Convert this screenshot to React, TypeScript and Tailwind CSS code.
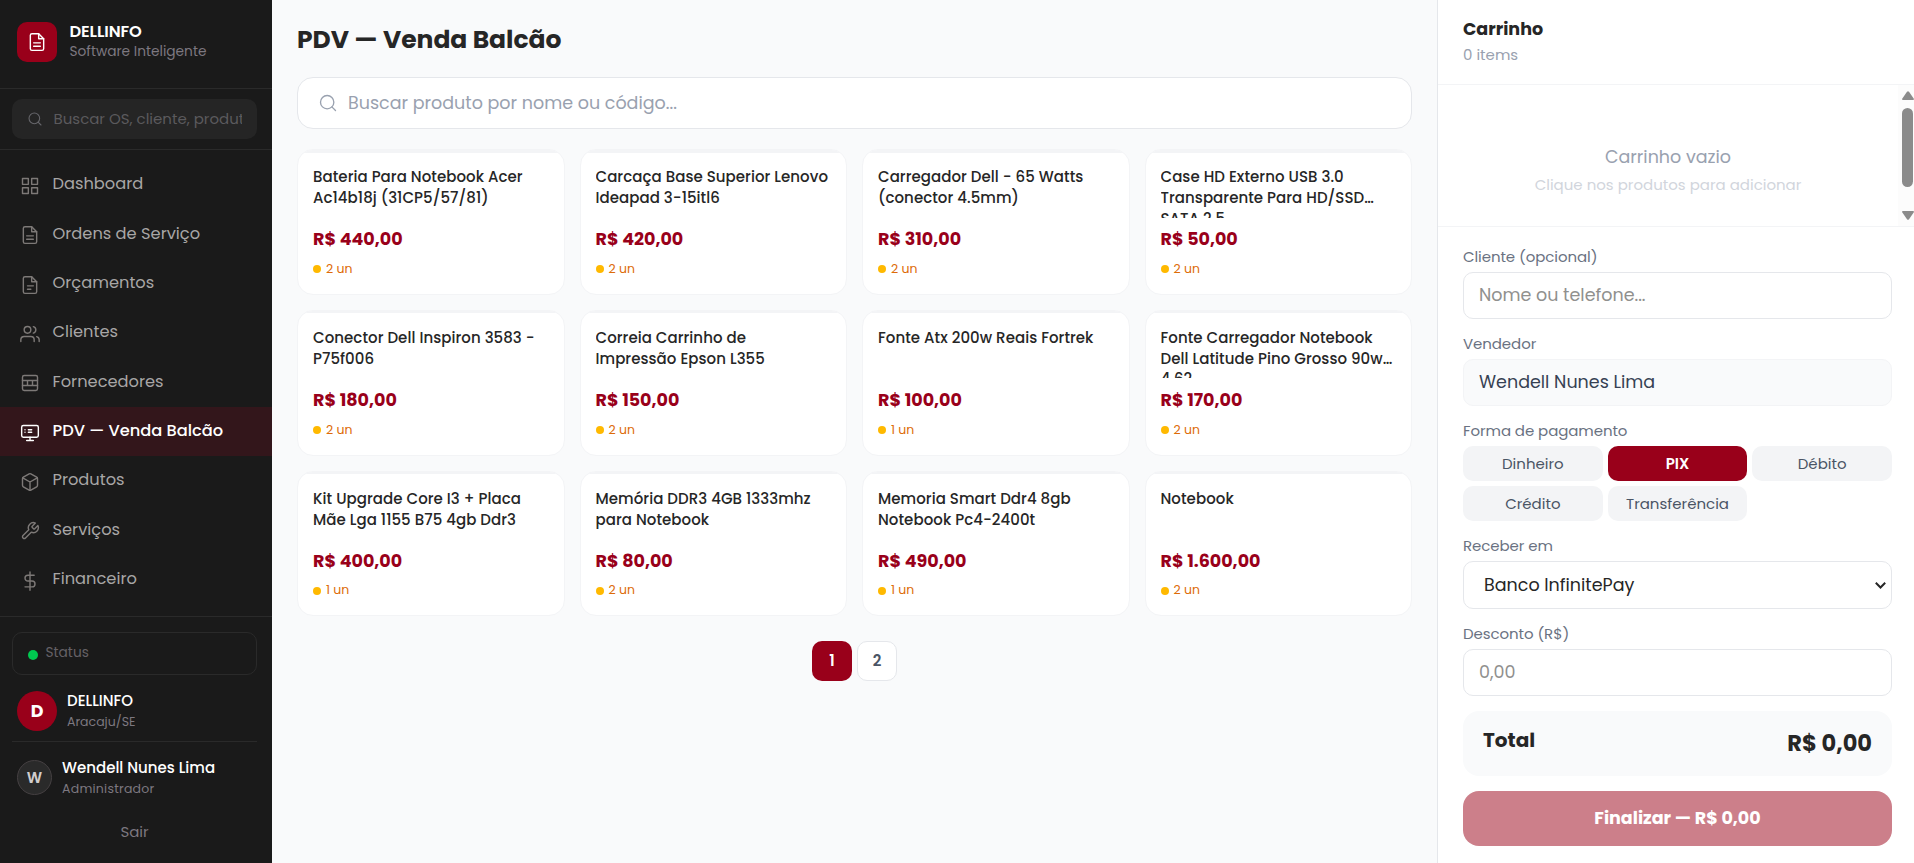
import type { ReactNode } from 'react'
import { Search } from 'lucide-react'

interface NavItem {
  label: string
  icon: ReactNode
  active?: boolean
}

const navItems: NavItem[] = [
  {
    label: 'Dashboard',
    icon: (
      <>
        <rect x="3" y="3" width="7" height="7" />
        <rect x="14" y="3" width="7" height="7" />
        <rect x="3" y="14" width="7" height="7" />
        <rect x="14" y="14" width="7" height="7" />
      </>
    ),
  },
  {
    label: 'Ordens de Serviço',
    icon: (
      <>
        <path d="M14 2H6a2 2 0 0 0-2 2v16a2 2 0 0 0 2 2h12a2 2 0 0 0 2-2V8z" />
        <path d="M14 2v6h6M8 13h8M8 17h8" />
      </>
    ),
  },
  {
    label: 'Orçamentos',
    icon: (
      <>
        <path d="M14 2H6a2 2 0 0 0-2 2v16a2 2 0 0 0 2 2h12a2 2 0 0 0 2-2V8z" />
        <path d="M14 2v6h6M9 13h7M9 17h4" />
      </>
    ),
  },
  {
    label: 'Clientes',
    icon: (
      <>
        <path d="M17 21v-2a4 4 0 0 0-4-4H5a4 4 0 0 0-4 4v2" />
        <circle cx="9" cy="7" r="4" />
        <path d="M23 21v-2a4 4 0 0 0-3-3.87M16 3.13a4 4 0 0 1 0 7.75" />
      </>
    ),
  },
  {
    label: 'Fornecedores',
    icon: (
      <>
        <rect x="3" y="3" width="18" height="18" rx="2" />
        <path d="M3 9h18M3 15h18M9 9v6M15 9v6" />
      </>
    ),
  },
  {
    label: 'PDV — Venda Balcão',
    active: true,
    icon: (
      <>
        <rect x="2" y="3" width="20" height="14" rx="2" />
        <path d="M8 21h8M12 17v4M6 8h.01M10 8h4M6 11h.01M10 11h4" />
      </>
    ),
  },
  {
    label: 'Produtos',
    icon: (
      <>
        <path d="M21 16V8a2 2 0 0 0-1-1.73l-7-4a2 2 0 0 0-2 0l-7 4A2 2 0 0 0 3 8v8a2 2 0 0 0 1 1.73l7 4a2 2 0 0 0 2 0l7-4A2 2 0 0 0 21 16z" />
        <path d="M3.27 6.96 12 12.01l8.73-5.05M12 22.08V12" />
      </>
    ),
  },
  {
    label: 'Serviços',
    icon: (
      <path d="M14.7 6.3a1 1 0 0 0 0 1.4l1.6 1.6a1 1 0 0 0 1.4 0l3.77-3.77a6 6 0 0 1-7.94 7.94l-6.91 6.91a2.12 2.12 0 0 1-3-3l6.91-6.91a6 6 0 0 1 7.94-7.94l-3.76 3.76z" />
    ),
  },
  {
    label: 'Financeiro',
    icon: <path d="M12 1v22M17 5H9.5a3.5 3.5 0 0 0 0 7h5a3.5 3.5 0 0 1 0 7H6" />,
  },
]

interface Product {
  name: string[]
  price: string
  stock: number
}

const products: Product[] = [
  { name: ['Bateria Para Notebook Acer', 'Ac14b18j (31CP5/57/81)'], price: '440,00', stock: 2 },
  { name: ['Carcaça Base Superior Lenovo', 'Ideapad 3-15itl6'], price: '420,00', stock: 2 },
  { name: ['Carregador Dell - 65 Watts', '(conector 4.5mm)'], price: '310,00', stock: 2 },
  { name: ['Case HD Externo USB 3.0', 'Transparente Para HD/SSD…', 'SATA 2.5'], price: '50,00', stock: 2 },
  { name: ['Conector Dell Inspiron 3583 -', 'P75f006'], price: '180,00', stock: 2 },
  { name: ['Correia Carrinho de', 'Impressão Epson L355'], price: '150,00', stock: 2 },
  { name: ['Fonte Atx 200w Reais Fortrek'], price: '100,00', stock: 1 },
  { name: ['Fonte Carregador Notebook', 'Dell Latitude Pino Grosso 90w…', '4.62'], price: '170,00', stock: 2 },
  { name: ['Kit Upgrade Core I3 + Placa', 'Mãe Lga 1155 B75 4gb Ddr3'], price: '400,00', stock: 1 },
  { name: ['Memória DDR3 4GB 1333mhz', 'para Notebook'], price: '80,00', stock: 2 },
  { name: ['Memoria Smart Ddr4 8gb', 'Notebook Pc4-2400t'], price: '490,00', stock: 1 },
  { name: ['Notebook'], price: '1.600,00', stock: 2 },
]

const payments = ['Dinheiro', 'PIX', 'Débito', 'Crédito', 'Transferência']

function Icon({ size, children }: { size: number; children: ReactNode }) {
  return (
    <svg
      width={size}
      height={size}
      viewBox="0 0 24 24"
      fill="none"
      stroke="currentColor"
      strokeWidth="1.7"
      strokeLinecap="round"
      strokeLinejoin="round"
      className="shrink-0"
    >
      {children}
    </svg>
  )
}

function Sidebar() {
  return (
    <aside className="flex w-[272px] shrink-0 flex-col bg-[#1a1a1a]">
      <div className="flex h-[89px] items-start gap-[12.5px] border-b border-[#2a2a2a] pl-[17px] pt-[22px]">
        <div className="flex size-10 items-center justify-center rounded-[10px] bg-[#99001a] text-white">
          <Icon size={20}>{navItems[1].icon}</Icon>
        </div>
        <div>
          <p className="text-[16.25px] leading-[19px] font-semibold tracking-[-0.1px] text-white">DELLINFO</p>
          <p className="text-[13.75px] leading-[22px] text-[#7d7880]">Software Inteligente</p>
        </div>
      </div>

      <div className="h-[61px] border-b border-[#2a2a2a] px-3 pt-[10px]">
        <div className="mr-[3px] flex h-10 items-center rounded-[10px] bg-[#252525] pl-[15px] pr-[15px] text-[#66666b]">
          <Search size={16} strokeWidth={1.6} className="shrink-0" />
          <span className="ml-[10.5px] overflow-hidden text-[15px] whitespace-nowrap text-[#5b5a5d]">
            Buscar OS, cliente, produto
          </span>
        </div>
      </div>

      <nav className="flex-1 pt-[10.2px]">
        {navItems.map((item) => (
          <div
            key={item.label}
            className={`flex h-[49.35px] items-center pl-5 ${
              item.active ? 'bg-[#33161b] font-medium text-white' : 'text-[#a8a6a6]'
            }`}
          >
            <span className={`mt-[2px] ${item.active ? 'text-white' : 'text-[#7d7977]'}`}>
              <Icon size={20}>{item.icon}</Icon>
            </span>
            <span className="mb-[1px] ml-[12.5px] text-[16.25px]">{item.label}</span>
          </div>
        ))}
      </nav>

      <div className="h-[247px] border-t border-[#2a2a2a] pl-3 pr-[15px] pt-[15px]">
        <div className="flex h-[43px] items-center rounded-[10px] border border-[#2a2a2a] pl-[15px]">
          <span className="mt-[3px] size-[10px] rounded-full bg-[#00c950]" />
          <span className="mb-px ml-[7.5px] text-[13.75px] text-[#656166]">Status</span>
        </div>
        <div className="flex h-[67px] items-start gap-[10px] border-b border-[#2a2a2a] pl-[5px] pt-4">
          <div className="flex size-10 items-center justify-center rounded-full bg-[#99001a] text-[17.5px] font-bold text-white">
            D
          </div>
          <div>
            <p className="text-[15px] leading-[20px] font-medium text-white">DELLINFO</p>
            <p className="text-[12.5px] leading-[22px] text-[#7d7880]">Aracaju/SE</p>
          </div>
        </div>
        <div className="flex items-start gap-[10px] pl-[5px] pt-[18px]">
          <div className="flex size-[35px] items-center justify-center rounded-full border border-[#454042] bg-[#2a2a2a] pt-px text-[15px] font-semibold text-[#d1cdcd]">
            W
          </div>
          <div className="-mt-[2px]">
            <p className="text-[15px] leading-[20px] font-medium text-white">Wendell Nunes Lima</p>
            <p className="text-[12.5px] leading-[21px] tracking-[0.25px] text-[#7d7880]">Administrador</p>
          </div>
        </div>
        <p className="mt-[22px] text-center text-[15px] leading-[22px] text-[#7d7880]">Sair</p>
      </div>
    </aside>
  )
}

function ProductCard({ name, price, stock }: Product) {
  return (
    <div className="h-[145.8px] overflow-hidden rounded-2xl border border-[#f3f4f6] bg-white">
      <div className="h-[2.6px] bg-[#f3f4f6]" />
      <div className="px-[15px] pt-[14.8px]">
        <div className="h-[50.2px] overflow-hidden text-[15px] leading-[20.6px] font-medium tracking-[0.05px] whitespace-nowrap text-[#262626]">
          {name.map((line) => (
            <p key={line}>{line}</p>
          ))}
        </div>
        <p className="mt-[9.8px] text-[17.5px] leading-[24px] font-bold text-[#99001a]">R$ {price}</p>
        <p className="mt-[7.4px] flex items-center gap-[5px] text-[12.5px] leading-[20px] text-[#dd6b08]">
          <span className="mt-px size-2 rounded-full bg-[#ffb900]" />
          {stock} un
        </p>
      </div>
    </div>
  )
}

function Catalog() {
  return (
    <main className="min-w-0 flex-1 bg-[#f9fafb] px-[25px] pt-[23px]">
      <h1 className="text-[25px] leading-[34px] font-bold text-[#262626]">PDV — Venda Balcão</h1>
      <div className="mt-5 flex h-[52px] items-center rounded-2xl border border-[#e5e7eb] bg-white pl-5">
        <Search size={20} strokeWidth={1.6} className="text-[#99a1af]" />
        <span className="ml-[10px] text-[17.5px] text-[#99a1af]">Buscar produto por nome ou código...</span>
      </div>
      <div className="mt-5 grid grid-cols-4 gap-[15px]">
        {products.map((product) => (
          <ProductCard key={product.name[0]} {...product} />
        ))}
      </div>
      <div className="mt-[25px] flex justify-center gap-[5px] text-[15px] font-semibold">
        <div className="flex size-10 items-center justify-center rounded-[10px] bg-[#99001a] text-white">1</div>
        <div className="flex size-10 items-center justify-center rounded-[10px] border border-[#e5e7eb] bg-white text-[#4a5565]">
          2
        </div>
      </div>
    </main>
  )
}

function Label({ children }: { children: ReactNode }) {
  return (
    <p className="mt-[15px] h-[25.2px] text-[15px] leading-[20px] tracking-[-0.08px] text-[#6a7282]">{children}</p>
  )
}

function Cart() {
  return (
    <aside className="flex w-[477px] shrink-0 flex-col border-l border-[#e5e7eb] bg-white">
      <div className="h-[85px] border-b border-[#f3f4f6] pl-[25px] pt-[17px]">
        <p className="text-[17.5px] leading-[24px] font-bold text-[#262626]">Carrinho</p>
        <p className="mt-[2px] text-[15px] leading-[24px] text-[#99a1af]">0 items</p>
      </div>

      <div className="flex h-[142px] border-b border-[#f3f4f6]">
        <div className="flex-1 pt-[60px] text-center">
          <p className="text-[17.5px] leading-[24px] text-[#99a1af]">Carrinho vazio</p>
          <p className="mt-[4px] text-[15px] leading-[24px] text-[#d1d5dc]">Clique nos produtos para adicionar</p>
        </div>
        <div className="flex w-4 flex-col items-center bg-[#fcfcfc] pl-[3px]">
          <svg width="12" height="9" viewBox="0 0 12 9" fill="#8b8b8b" className="mt-[6px]">
            <path d="M5 .8 Q6 -.5 7 .8 L12 8 Q12 9 11 9 H1 Q0 9 0 8 Z" />
          </svg>
          <div className="mt-2 h-[79px] w-[11px] rounded-full bg-[#8b8b8b]" />
          <svg width="12" height="9" viewBox="0 0 12 9" fill="#8b8b8b" className="mt-6">
            <path d="M5 8.2 Q6 9.5 7 8.2 L12 1 Q12 0 11 0 H1 Q0 0 0 1 Z" />
          </svg>
        </div>
      </div>

      <div className="pl-[25px] pr-[22px] pt-[4.8px]">
        <Label>Cliente (opcional)</Label>
        <div className="flex h-[46.9px] items-center rounded-[10px] border border-[#e5e7eb] px-[15px] text-[17.5px] text-[#90908e]">
          Nome ou telefone...
        </div>
        <Label>Vendedor</Label>
        <div className="flex h-[46.9px] items-center rounded-[10px] border border-[#f3f4f6] bg-[#f9fafb] px-[15px] text-[17.5px] text-[#364153]">
          Wendell Nunes Lima
        </div>
        <Label>Forma de pagamento</Label>
        <div className="grid grid-cols-3 gap-[5px]">
          {payments.map((payment) => (
            <div
              key={payment}
              className={`flex h-[35px] items-center justify-center rounded-[10px] pt-px text-[15px] ${
                payment === 'PIX' ? 'bg-[#99001a] font-semibold text-white' : 'bg-[#f3f4f6] text-[#4a5565]'
              }`}
            >
              {payment}
            </div>
          ))}
        </div>
        <Label>Receber em</Label>
        <div className="flex h-[47.5px] items-center justify-between rounded-[10px] border border-[#e5e7eb] pl-5 pr-[5px] text-[17.5px] text-[#262626]">
          Banco InfinitePay
          <svg width="11" height="7" viewBox="0 0 11 7" fill="none" stroke="#262626" strokeWidth="2">
            <path d="M.8 .8 5.5 5.5 10.2 .8" />
          </svg>
        </div>
        <Label>Desconto (R$)</Label>
        <div className="flex h-[46.9px] items-center rounded-[10px] border border-[#e5e7eb] px-[15px] text-[17.5px] text-[#90908e]">
          0,00
        </div>
        <div className="mt-[15px] flex h-[65px] justify-between rounded-2xl bg-[#f9fafb] px-5 font-bold text-[#262626]">
          <span className="pt-[16.5px] text-[20px] leading-[26px]">Total</span>
          <span className="pt-[17px] text-[22.5px] leading-[30px]">R$ 0,00</span>
        </div>
        <div className="mt-[15px] flex h-[55px] items-center justify-center rounded-2xl bg-[#cc7f8a] text-[17.5px] font-bold text-white">
          Finalizar — R$ 0,00
        </div>
      </div>
    </aside>
  )
}

export default function App() {
  return (
    <div className="flex h-[863px] w-full overflow-hidden bg-white font-['Poppins','Inter',sans-serif]">
      <Sidebar />
      <Catalog />
      <Cart />
    </div>
  )
}
